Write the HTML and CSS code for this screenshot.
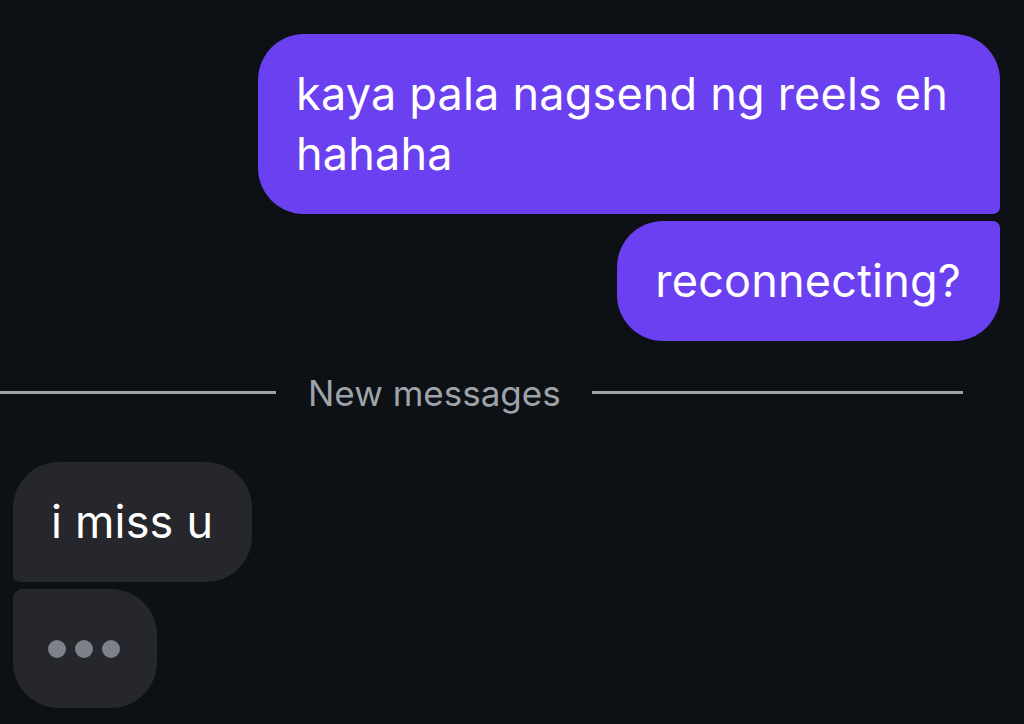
FILE: index.html
```html
<!DOCTYPE html>
<html lang="en">
<head>
  <meta charset="UTF-8">
  <meta name="viewport" content="width=device-width, initial-scale=1.0">
  <title>Chat</title>
  <link rel="stylesheet" href="styles.css">
</head>
<body>
  <div class="thread">
    <div class="group outgoing">
      <div class="bubble first">kaya pala nagsend ng reels eh hahaha</div>
      <div class="bubble last">reconnecting?</div>
    </div>

    <div class="divider">
      <span class="line left"></span>
      <span class="divider-text">New messages</span>
      <span class="line right"></span>
    </div>

    <div class="group incoming">
      <div class="bubble first">i miss u</div>
      <div class="bubble last typing">
        <span class="dot"></span>
        <span class="dot"></span>
        <span class="dot"></span>
      </div>
    </div>
  </div>
</body>
</html>
```

FILE: styles.css
```css
body {
  margin: 0;
  background-color: #0d1014;
  color: white;
  font-family: 'Inter', 'Roboto', sans-serif;
}

.thread {
  padding: 34px 24px 0 13px;
}

.group {
  display: flex;
  flex-direction: column;
  gap: 7px;
}

.outgoing {
  align-items: flex-end;
}

.incoming {
  align-items: flex-start;
}

.bubble {
  box-sizing: border-box;
  max-width: 742px;
  padding: 30px 39px 30px 38px;
  font-size: 45px;
  letter-spacing: 0.2px;
  line-height: 60px;
  border-radius: 46px;
}

.outgoing .bubble {
  background-color: #6a40f0;
}

.outgoing .first {
  border-bottom-right-radius: 7px;
}

.outgoing .last {
  border-top-right-radius: 7px;
}

.incoming .bubble {
  background-color: #25272c;
}

.incoming .first {
  border-bottom-left-radius: 7px;
}

.incoming .last {
  border-top-left-radius: 10px;
}

.divider {
  display: flex;
  align-items: center;
  margin: 29px 37px 47px -13px;
  height: 45px;
}

.line {
  height: 3px;
  background-color: #a0a4aa;
}

.line.left {
  width: 276px;
}

.line.right {
  flex: 1;
}

.divider-text {
  padding: 0 31px 0 32px;
  font-size: 35px;
  color: #9ea3aa;
}

.typing {
  display: flex;
  align-items: center;
  gap: 9px;
  width: 144px;
  height: 119px;
  padding: 0 0 0 35px;
}

.dot {
  width: 18px;
  height: 18px;
  border-radius: 50%;
  background-color: #7d8189;
}
```
